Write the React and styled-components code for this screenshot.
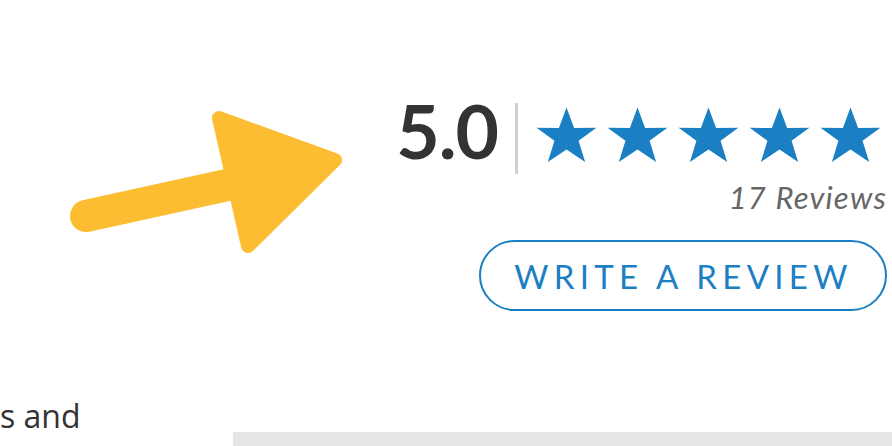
import styled, { createGlobalStyle } from "styled-components";

const GlobalStyle = createGlobalStyle`
  html, body {
    margin: 0;
    padding: 0;
    background: #fff;
    overflow: hidden;
  }
`;

const Page = styled.div`
  width: 892px;
  height: 446px;
  overflow: hidden;
  display: flex;
  flex-direction: column;
`;

const Top = styled.div`
  display: flex;
  align-items: flex-start;
  padding-top: 93px;
`;

const Arrow = styled.svg`
  display: block;
  flex: none;
  margin-top: 7px;
`;

const RatingPanel = styled.div`
  margin-left: auto;
  padding-right: 5px;
  display: flex;
  flex-direction: column;
  align-items: flex-end;
`;

const ScoreRow = styled.div`
  display: flex;
  align-items: flex-start;
  margin-right: 5px;
`;

const Score = styled.div`
  font-family: Lato, "Liberation Sans", sans-serif;
  font-weight: 700;
  font-size: 75px;
  line-height: 75px;
  color: #333;
  letter-spacing: -1px;
`;

const Divider = styled.div`
  width: 3px;
  height: 71px;
  margin: 10px 17px 0 17px;
  background: #d0d0d0;
`;

const Stars = styled.div`
  display: flex;
  gap: 8px;
  margin-top: 13px;
`;

const Star = styled.svg`
  display: block;
  width: 63px;
  height: 60px;
`;

const Reviews = styled.div`
  margin-top: 8px;
  font-family: Lato, "Liberation Sans", sans-serif;
  font-style: italic;
  font-weight: 400;
  font-size: 31px;
  line-height: 30px;
  letter-spacing: 1.2px;
  color: #666;
`;

const ReviewButton = styled.button`
  margin-top: 28px;
  width: 408px;
  height: 71px;
  box-sizing: border-box;
  border: 2px solid #1b80c3;
  border-radius: 36px;
  background: #fff;
  color: #1b80c3;
  font-family: Lato, "Liberation Sans", sans-serif;
  font-weight: 400;
  font-size: 33px;
  letter-spacing: 5.3px;
  padding: 0 0 0 1px;
  cursor: pointer;
`;

const Copy = styled.p`
  margin: 89px 0 0 0;
  font-family: "Open Sans", sans-serif;
  font-size: 32px;
  line-height: 31px;
  color: #333;
`;

const GreyBar = styled.div`
  margin: 1px 0 0 233px;
  height: 20px;
  background: #e6e6e6;
`;

const STAR = "12,0.6 14.9,8.4 23.4,8.3 16.6,13.3 19.1,21.4 12,16.6 4.9,21.4 7.4,13.3 0.6,8.3 9.1,8.4";

export default function App() {
  return (
    <>
      <GlobalStyle />
      <Page>
        <Top>
          <Arrow width="360" height="170" viewBox="0 100 360 170">
            <line x1="86" y1="216" x2="250" y2="180" stroke="#fcbd32" strokeWidth="32" strokeLinecap="round" />
            <polygon
              points="219,118 335,160 248,246"
              fill="#fcbd32"
              stroke="#fcbd32"
              strokeWidth="14"
              strokeLinejoin="round"
            />
          </Arrow>
          <RatingPanel>
            <ScoreRow>
              <Score>5.0</Score>
              <Divider />
              <Stars>
                {[0, 1, 2, 3, 4].map((i) => (
                  <Star key={i} viewBox="0 0 24 22.9" preserveAspectRatio="none">
                    <polygon points={STAR} fill="#1b80c3" />
                  </Star>
                ))}
              </Stars>
            </ScoreRow>
            <Reviews>17 Reviews</Reviews>
            <ReviewButton>WRITE A REVIEW</ReviewButton>
          </RatingPanel>
        </Top>
        <Copy>s and</Copy>
        <GreyBar />
      </Page>
    </>
  );
}
